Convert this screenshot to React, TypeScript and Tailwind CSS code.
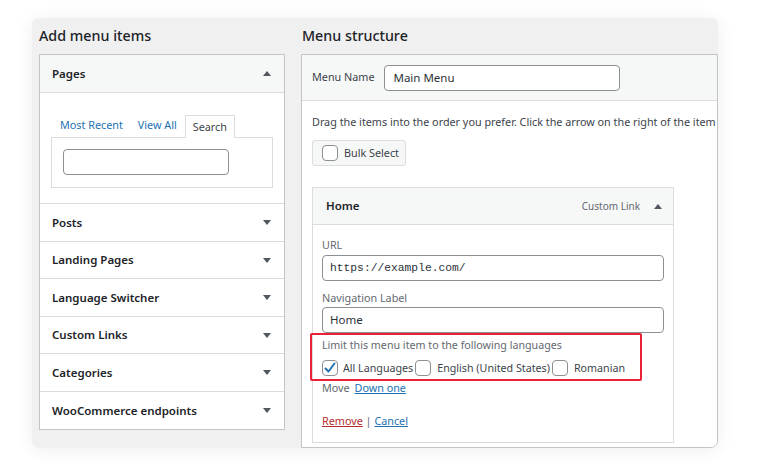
import React from "react";

const font = { fontFamily: '"Noto Sans", "Open Sans", sans-serif' };

function TriDown() {
  return (
    <svg width="8" height="5" viewBox="0 0 8 5" className="block">
      <path d="M0 0 L8 0 L4 5 Z" fill="#50575e" />
    </svg>
  );
}
function TriUp() {
  return (
    <svg width="8" height="5" viewBox="0 0 8 5" className="block">
      <path d="M0 5 L8 5 L4 0 Z" fill="#50575e" />
    </svg>
  );
}

function Checkbox({ checked = false }: { checked?: boolean }) {
  return (
    <span className="inline-flex w-[16px] h-[16px] shrink-0 items-center justify-center rounded-[4px] border border-[#8c8f94] bg-white">
      {checked && (
        <svg width="14" height="14" viewBox="0 0 14 14">
          <path d="M2.5 7.5 L5.5 10.5 L11.5 2.5" stroke="#2271b1" strokeWidth="2" fill="none" strokeLinecap="round" strokeLinejoin="round" />
        </svg>
      )}
    </span>
  );
}

const rows: { label: string; h: string }[] = [
  { label: "Posts", h: "h-[38px]" },
  { label: "Landing Pages", h: "h-[37px]" },
  { label: "Language Switcher", h: "h-[38px]" },
  { label: "Custom Links", h: "h-[37px]" },
  { label: "Categories", h: "h-[38px]" },
  { label: "WooCommerce endpoints", h: "h-[37px]" },
];

export default function App() {
  return (
    <div className="w-[768px] h-[473px] bg-white relative overflow-hidden whitespace-nowrap" style={font}>
      <div className="absolute left-[32px] top-[18px] w-[686px] h-[430px] rounded-[7px] bg-[#f0f0f1] shadow-[0_2px_18px_rgba(0,0,0,0.07)] flex pl-[7px] overflow-hidden">
        {/* Left column */}
        <div className="w-[246px] shrink-0 flex flex-col">
          <div className="h-[36px] flex items-center text-[14.3px] font-medium text-[#1d2327] leading-none pt-[1px]">Add menu items</div>
          <div className="border border-[#c3c4c7] bg-white">
            <div className="h-[38px] bg-[#f6f7f7] border-b border-[#dcdcde] flex items-center justify-between pl-[12px] pr-[13px]">
              <span className="text-[11.5px] font-semibold text-[#1d2327]">Pages</span>
              <TriUp />
            </div>
            <div className="pt-[21px] pb-[15px] px-[11px] border-b border-[#dcdcde]">
              <div className="flex items-end h-[23px] pl-[9px] text-[10.8px]">
                <span className="text-[#2271b1] mr-[15px] mb-[4px]">Most Recent</span>
                <span className="text-[#2271b1] mr-[8px] mb-[4px]">View All</span>
                <span className="h-[23px] px-[7px] border border-b-0 border-[#dcdcde] bg-white text-[#3c434a] flex items-center relative top-[1px]">Search</span>
              </div>
              <div className="border border-[#dcdcde] h-[51px] pl-[11px] pt-[11px]">
                <div className="w-[166px] h-[26px] border border-[#8c8f94] rounded-[4px] bg-white"></div>
              </div>
            </div>
            {rows.map((r, i) => (
              <div
                key={r.label}
                className={`${r.h} flex items-center justify-between pl-[12px] pr-[13px] ${i < rows.length - 1 ? "border-b border-[#dcdcde]" : ""}`}
              >
                <span className="text-[11.5px] font-semibold text-[#1d2327]">{r.label}</span>
                <TriDown />
              </div>
            ))}
          </div>
        </div>

        {/* Right column */}
        <div className="ml-[16px] flex-1 min-w-0 flex flex-col">
          <div className="h-[36px] flex items-center text-[14.3px] font-medium text-[#1d2327] leading-none pt-[1px] pl-[1px]">Menu structure</div>
          <div className="flex-1 border border-[#c3c4c7] bg-white rounded-br-[7px] overflow-hidden">
            <div className="h-[46px] bg-[#f6f7f7] border-b border-[#dcdcde] flex items-center pl-[10px]">
              <span className="text-[10.8px] text-[#3c434a] mr-[10px]">Menu Name</span>
              <div className="w-[236px] h-[26px] border border-[#8c8f94] rounded-[4px] bg-white flex items-center pl-[8px] text-[11.5px] text-[#2c3338]">Main Menu</div>
            </div>
            <div className="pl-[10px] pt-[12px]">
              <div className="text-[10.8px] text-[#3c434a] leading-[18px]">
                Drag the items into the order you prefer. Click the arrow on the right of the item
              </div>
              <div className="mt-[9px] w-[94px] h-[26px] bg-[#f6f7f7] border border-[#dcdcde] rounded-[3px] flex items-center pl-[9px] gap-[6px]">
                <Checkbox />
                <span className="text-[10.8px] text-[#3c434a]">Bulk Select</span>
              </div>
              <div className="mt-[21px] w-[362px] border border-[#dcdcde]">
                <div className="h-[37px] bg-[#f6f7f7] border-b border-[#dcdcde] flex items-center justify-between pl-[13px] pr-[11px]">
                  <span className="text-[11.5px] font-semibold text-[#1d2327]">Home</span>
                  <div className="flex items-center gap-[14px]">
                    <span className="text-[10px] text-[#646970]">Custom Link</span>
                    <TriUp />
                  </div>
                </div>
                <div className="relative pl-[9px] pr-[9px] pt-[11px] pb-[12px]">
                  <div className="text-[10.8px] text-[#646970] leading-[18px]">URL</div>
                  <div className="mt-[1px] h-[26px] border border-[#8c8f94] rounded-[4px] flex items-center pl-[7px] text-[11.3px] text-[#2c3338]" style={{ fontFamily: '"Liberation Mono", "DejaVu Sans Mono", monospace' }}>
                    https://example.com/
                  </div>
                  <div className="mt-[8px] text-[10.8px] text-[#646970] leading-[18px]">Navigation Label</div>
                  <div className="h-[26px] border border-[#8c8f94] rounded-[4px] flex items-center pl-[7px] text-[11.5px] text-[#2c3338]">Home</div>
                  <div className="mt-[3px] text-[10.7px] text-[#646970] leading-[18px]">Limit this menu item to the following languages</div>
                  <div className="mt-[5px] flex items-center text-[10.7px] text-[#3c434a] h-[18px]">
                    <Checkbox checked />
                    <span className="ml-[5px] mr-[2px]">All Languages</span>
                    <Checkbox />
                    <span className="ml-[6px] mr-[2px]">English (United States)</span>
                    <Checkbox />
                    <span className="ml-[6px]">Romanian</span>
                  </div>
                  <div className="mt-[2px] text-[10.8px] text-[#646970] leading-[18px]">
                    Move <span className="ml-[2px] text-[#2271b1] underline">Down one</span>
                  </div>
                  <div className="mt-[15px] text-[10.8px] leading-[18px] text-[#646970]">
                    <span className="text-[#b32d2e] underline">Remove</span> | <span className="text-[#2271b1] underline">Cancel</span>
                  </div>
                  <div className="absolute left-[-3px] top-[108px] w-[332px] h-[48px] border-2 border-[#e8203a] rounded-[2px] pointer-events-none"></div>
                </div>
              </div>
            </div>
          </div>
        </div>
      </div>
    </div>
  );
}
